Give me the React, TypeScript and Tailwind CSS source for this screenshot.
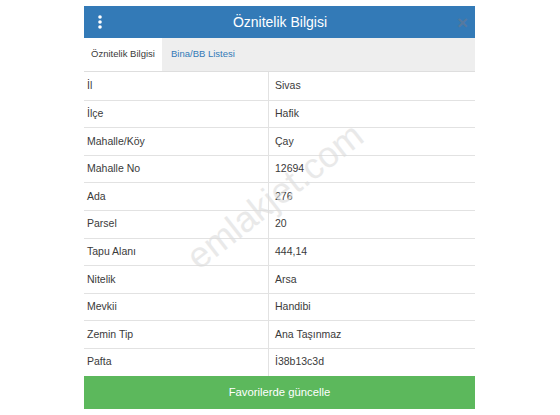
const rows: [string, string][] = [
  ["İl", "Sivas"],
  ["İlçe", "Hafik"],
  ["Mahalle/Köy", "Çay"],
  ["Mahalle No", "12694"],
  ["Ada", "276"],
  ["Parsel", "20"],
  ["Tapu Alanı", "444,14"],
  ["Nitelik", "Arsa"],
  ["Mevkii", "Handibi"],
  ["Zemin Tip", "Ana Taşınmaz"],
  ["Pafta", "İ38b13c3d"],
];

export default function App() {
  return (
    <main
      className="h-[415px] w-[560px] overflow-hidden bg-white pt-[6px] text-[#3a3a3a]"
      style={{ fontFamily: '"Liberation Sans", Arial, sans-serif' }}
    >
      <div className="relative ml-[84px] w-[391px]">
        {/* header */}
        <header className="flex h-[32px] items-center justify-between bg-[#337ab7] pl-[12px] pr-[7px]">
          <svg width="6" height="14" viewBox="0 0 6 14" className="ml-[1px]">
            <circle cx="3" cy="2" r="1.8" fill="#fff" />
            <circle cx="3" cy="7" r="1.8" fill="#fff" />
            <circle cx="3" cy="12" r="1.8" fill="#fff" />
          </svg>
          <h1 className="text-[14px] text-white">Öznitelik Bilgisi</h1>
          <span className="text-[19px] font-bold leading-none text-[#55799f]">×</span>
        </header>

        {/* tabs */}
        <nav className="flex h-[34px] border-b border-[#dedede] bg-[#eeeeee] text-[9.5px]">
          <div className="flex w-[78px] items-center justify-center bg-white text-[#3a3a3a]">
            Öznitelik Bilgisi
          </div>
          <div className="flex items-center pl-[9px] text-[#337ab7]">Bina/BB Listesi</div>
        </nav>

        {/* table */}
        <div className="text-[10.5px]">
          {rows.map(([label, value], i) => (
            <div
              key={label}
              className={`flex h-[27.6px] ${i > 0 ? "border-t border-[#e2e2e2]" : ""}`}
            >
              <div className="flex w-[185px] items-center border-r border-[#e2e2e2] pl-[3px]">
                {label}
              </div>
              <div className="flex items-center pl-[6px]">{value}</div>
            </div>
          ))}
        </div>

        <button className="h-[33px] w-full bg-[#5cb85c] text-[11.3px] text-white">
          Favorilerde güncelle
        </button>

        {/* watermark */}
        <div className="pointer-events-none absolute left-[85px] top-[163px] -rotate-[38deg] text-[36px] text-[#dcdcdc] opacity-60">
          emlakjet.com
        </div>
      </div>
    </main>
  );
}
